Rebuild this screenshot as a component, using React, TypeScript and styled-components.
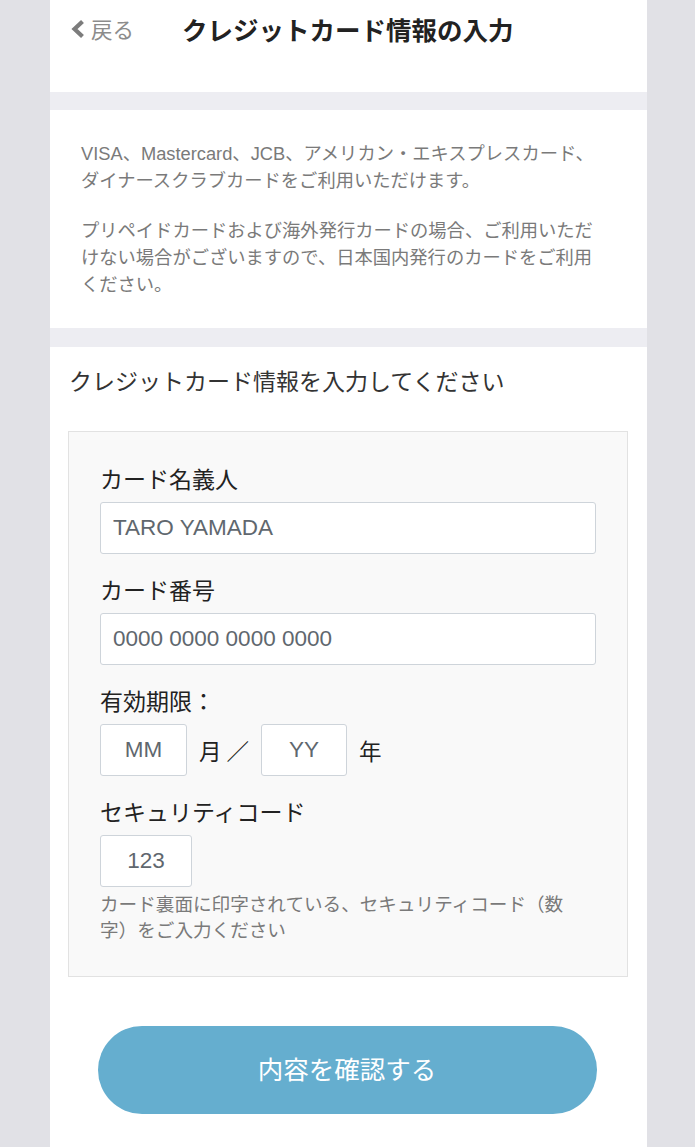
import React from "react";
import styled, { createGlobalStyle } from "styled-components";

const GlobalStyle = createGlobalStyle`
  html, body { margin: 0; padding: 0; }
  body {
    background: #e1e1e6;
    font-family: "Liberation Sans", "Noto Sans CJK JP", sans-serif;
  }
  * { box-sizing: border-box; }
`;

const Page = styled.div`
  display: flex;
  min-height: 1147px;
  padding: 0 48px 0 50px;
`;

const Column = styled.main`
  flex: 1;
  display: flex;
  flex-direction: column;
  background: #ffffff;
`;

const Header = styled.header`
  height: 92px;
  padding: 0 20px;
`;

const HeaderRow = styled.div`
  height: 57px;
  display: flex;
  align-items: center;
`;

const BackLink = styled.a`
  width: 112px;
  display: flex;
  align-items: center;
  gap: 5px;
  color: #8c8c8c;
  font-family: "Noto Sans CJK JP", sans-serif;
  font-size: 21.5px;
  line-height: 30px;
  text-decoration: none;
  cursor: pointer;
`;

const Title = styled.h1`
  margin: 0;
  font-family: "Noto Sans CJK JP", sans-serif;
  font-size: 25.5px;
  line-height: 36px;
  font-weight: 700;
  color: #222222;
`;

const Band = styled.div<{ $h: number }>`
  height: ${(p) => p.$h}px;
  background: #ededf2;
`;

const InfoSection = styled.section`
  padding: 30px 46px 30px 31px;
  color: #7a7a7a;
  font-size: 18.3px;
  line-height: 27px;
`;

const InfoP = styled.p`
  margin: 0;
  & + & {
    margin-top: 23px;
  }
`;

const FormSection = styled.section`
  flex: 1;
  padding: 18px 19px 33px 18px;
`;

const SectionTitle = styled.h2`
  margin: 0 0 32px 1px;
  font-size: 23px;
  line-height: 34px;
  font-weight: 400;
  color: #333333;
`;

const FormBox = styled.div`
  background: #f9f9f9;
  border: 1px solid #e2e2e2;
  padding: 31px 31px 32px 31px;
  display: flex;
  flex-direction: column;
  gap: 20px;
`;

const Field = styled.div`
  display: flex;
  flex-direction: column;
  align-items: flex-start;
`;

const Label = styled.label`
  font-size: 23px;
  line-height: 34px;
  color: #222222;
  margin-bottom: 5px;
`;

const TextInput = styled.input<{ $w?: number; $center?: boolean }>`
  width: ${(p) => (p.$w ? `${p.$w}px` : "100%")};
  height: 52px;
  padding: 0 12px;
  border: 1px solid #ced4da;
  border-radius: 3px;
  background: #ffffff;
  font-family: "Liberation Sans", "Noto Sans CJK JP", sans-serif;
  font-size: 22.5px;
  color: #60676e;
  text-align: ${(p) => (p.$center ? "center" : "left")};
  outline: none;
  &::placeholder {
    color: #60676e;
    opacity: 1;
  }
`;

const ExpiryRow = styled.div`
  display: flex;
  align-items: center;
  gap: 12px;
`;

const Unit = styled.span`
  font-family: "Noto Sans CJK JP", sans-serif;
  font-size: 22.5px;
  line-height: 34px;
  color: #222222;
`;

const Help = styled.p`
  margin: 5px 0 0;
  max-width: 485px;
  font-size: 18.6px;
  line-height: 26px;
  color: #7a7a7a;
`;

const ButtonArea = styled.div`
  padding: 49px 0 0;
  display: flex;
  justify-content: center;
`;

const PrimaryButton = styled.button`
  width: 499px;
  height: 88px;
  margin-right: 2px;
  padding: 0 0 5px;
  border: none;
  border-radius: 44px;
  background: #65aecf;
  color: #ffffff;
  font-family: "Noto Sans CJK JP", sans-serif;
  font-size: 25.5px;
  cursor: pointer;
`;

const Chevron = () => (
  <svg width="16" height="20" viewBox="0 0 16 20" aria-hidden="true">
    <path d="M12.5 2.5 L4.5 10 L12.5 17.5" fill="none" stroke="#7c7c7c" strokeWidth="4.2" />
  </svg>
);

export default function App() {
  return (
    <>
      <GlobalStyle />
      <Page>
        <Column>
          <Header>
            <HeaderRow>
              <BackLink>
                <Chevron />
                戻る
              </BackLink>
              <Title>クレジットカード情報の入力</Title>
            </HeaderRow>
          </Header>
          <Band $h={18} />
          <InfoSection>
            <InfoP>
              VISA、Mastercard、JCB、アメリカン・エキスプレスカード、ダイナースクラブカードをご利用いただけます。
            </InfoP>
            <InfoP>
              プリペイドカードおよび海外発行カードの場合、ご利用いただけない場合がございますので、日本国内発行のカードをご利用ください。
            </InfoP>
          </InfoSection>
          <Band $h={19} />
          <FormSection>
            <SectionTitle>クレジットカード情報を入力してください</SectionTitle>
            <FormBox>
              <Field>
                <Label>カード名義人</Label>
                <TextInput placeholder="TARO YAMADA" />
              </Field>
              <Field>
                <Label>カード番号</Label>
                <TextInput placeholder="0000 0000 0000 0000" />
              </Field>
              <Field>
                <Label>有効期限：</Label>
                <ExpiryRow>
                  <TextInput $w={87} $center placeholder="MM" />
                  <Unit>月 ／</Unit>
                  <TextInput $w={86} $center placeholder="YY" />
                  <Unit>年</Unit>
                </ExpiryRow>
              </Field>
              <Field>
                <Label>セキュリティコード</Label>
                <TextInput $w={92} $center placeholder="123" />
                <Help>
                  カード裏面に印字されている、セキュリティコード（数字）をご入力ください
                </Help>
              </Field>
            </FormBox>
            <ButtonArea>
              <PrimaryButton>内容を確認する</PrimaryButton>
            </ButtonArea>
          </FormSection>
        </Column>
      </Page>
    </>
  );
}
